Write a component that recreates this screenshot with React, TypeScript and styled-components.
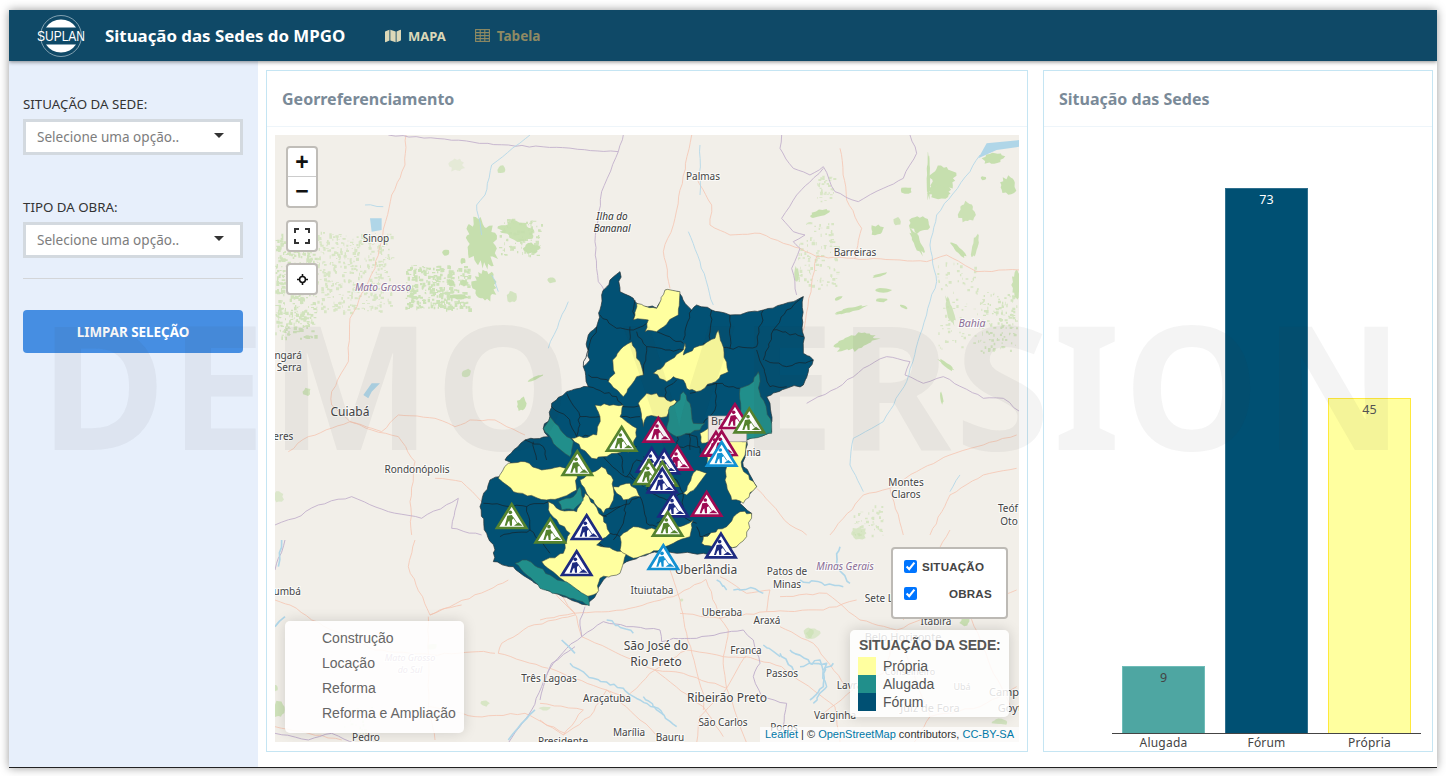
import React from "react";
import styled, { createGlobalStyle } from "styled-components";
import { FaMap } from "react-icons/fa";

const Global = createGlobalStyle`
  html, body { margin: 0; padding: 0; background: #fff; width: 1446px; height: 776px; overflow: hidden; }
  #root { width: 1446px; height: 776px; padding: 10px 9px 0; box-sizing: border-box; font-family: "Noto Sans", "Open Sans", sans-serif; }
`;

const Frame = styled.div`
  position: relative;
  width: 1428px;
  height: 758px;
  display: flex;
  flex-direction: column;
  background: #fff;
  border-bottom: 1px solid #222;
  box-sizing: border-box;
  box-shadow: 0 0 9px rgba(0, 0, 0, 0.4);
  overflow: hidden;
`;
const Nav = styled.header`
  height: 51px;
  flex: none;
  display: flex;
  align-items: center;
  background: #0f4967;
  box-shadow: 0 1px 4px rgba(0, 0, 0, 0.45);
  position: relative;
  z-index: 2;
`;
const LogoBox = styled.svg`
  width: 52px;
  height: 44px;
  margin-left: 26px;
  flex: none;
`;
const Title = styled.h1`
  margin: 0 0 0 18px;
  width: 280px;
  flex: none;
  color: #fff;
  font: 700 16.85px "Noto Sans", sans-serif;
  white-space: nowrap;
`;
const NavLink = styled.a<{ $active?: boolean }>`
  display: flex;
  align-items: center;
  gap: 7px;
  margin-right: 29px;
  font-size: ${(p) => (p.$active ? "13px" : "13.6px")};
  font-weight: 700;
  color: ${(p) => (p.$active ? "#dcd8b8" : "#8f8a63")};
  svg { font-size: 16px; }
`;
const Body = styled.div`
  flex: 1;
  display: flex;
  min-height: 0;
`;
const Sidebar = styled.aside`
  width: 249px;
  flex: none;
  box-sizing: border-box;
  padding: 33px 15px 0 14px;
  background: #e7effb;
  display: flex;
  flex-direction: column;
`;
const FieldLabel = styled.label`
  display: block;
  font-size: 13.3px;
  line-height: 20px;
  color: #333;
  margin-bottom: 5px;
`;
const SelectBox = styled.div`
  height: 36px;
  box-sizing: border-box;
  border: 3px solid #d3d9df;
  background: #fff;
  display: flex;
  align-items: center;
  justify-content: space-between;
  padding: 0 16px 0 11px;
  font-size: 13.55px;
  color: #7d7d7d;
  margin-bottom: 42px;
`;
const Caret = styled.i`
  width: 0;
  height: 0;
  margin-bottom: 3px;
  border-left: 5px solid transparent;
  border-right: 5px solid transparent;
  border-top: 5px solid #333;
`;
const Divider = styled.hr`
  margin: -22px 0 31px;
  border: 0;
  border-top: 1px solid #d3d5d8;
  width: 100%;
`;
const ClearButton = styled.button`
  height: 43px;
  border: 0;
  border-radius: 4px;
  background: #468ee2;
  color: #fff;
  font: 700 13.4px "Noto Sans", sans-serif;
`;
const Content = styled.main`
  flex: 1;
  display: flex;
  gap: 15px;
  padding: 9px 4px 15px 8px;
  box-sizing: border-box;
  min-width: 0;
`;
const Card = styled.section<{ $w: number }>`
  width: ${(p) => p.$w}px;
  flex: none;
  box-sizing: border-box;
  border: 1px solid #c5e5f3;
  display: flex;
  flex-direction: column;
  background: #fff;
`;
const CardHead = styled.div`
  height: 56px;
  flex: none;
  box-sizing: border-box;
  border-bottom: 1px solid #eef5fa;
  padding: 0 15px;
  display: flex;
  align-items: center;
  font-size: 16px;
  font-weight: 700;
  color: #7a8a98;
`;
const MapWrap = styled.div`
  position: relative;
  margin: 8px 8px 9px;
  width: 744px;
  height: 607px;
  overflow: hidden;
  background: #f2efe9;
`;
const MapSvg = styled.svg`
  display: block;
  width: 744px;
  height: 607px;
`;
const MapText = styled.text<{ $size?: number; $kind?: string }>`
  font-family: "Noto Sans", sans-serif;
  font-size: ${(p) => p.$size || 10}px;
  font-style: ${(p) => (p.$kind ? "italic" : "normal")};
  fill: ${(p) => (p.$kind === "state" ? "#8a6d96" : p.$kind === "isle" ? "#333" : "#444")};
  text-anchor: middle;
  paint-order: stroke;
  stroke: rgba(255, 255, 255, 0.7);
  stroke-width: 2px;
`;
const ControlStack = styled.div<{ $top: number }>`
  position: absolute;
  left: 11px;
  top: ${(p) => p.$top}px;
  width: 28px;
  box-sizing: content-box;
  border: 2px solid #c0bdb8;
  border-radius: 4px;
  background: #fff;
  overflow: hidden;
`;
const ControlBtn = styled.div<{ $big?: boolean }>`
  height: 28px;
  display: flex;
  align-items: center;
  justify-content: center;
  font: 700 ${(p) => (p.$big ? "23px" : "14px")} "Liberation Sans", sans-serif;
  color: #111;
  & + & { border-top: 1px solid #ccc; height: 29px; }
`;
const LayersBox = styled.div`
  position: absolute;
  left: 616px;
  top: 412px;
  width: 117px;
  height: 72px;
  box-sizing: border-box;
  border: 2px solid #bdbab5;
  border-radius: 4px;
  background: #fff;
  padding: 7px 0 0 11px;
  display: flex;
  flex-direction: column;
  gap: 7px;
`;
const LayerRow = styled.label<{ $indent?: number }>`
  display: flex;
  align-items: center;
  height: 20px;
  font: 700 11.6px "Liberation Sans", sans-serif;
  letter-spacing: 0.2px;
  color: #444;
  input { margin: 0 ${(p) => p.$indent ?? 5}px 0 0; width: 13px; height: 13px; }
`;
const Legend = styled.div`
  position: absolute;
  left: 575px;
  top: 495px;
  width: 159px;
  height: 87px;
  box-sizing: border-box;
  padding: 7px 0 0 8px;
  border-radius: 5px;
  background: rgba(255, 255, 255, 0.84);
  box-shadow: 0 0 14px rgba(0, 0, 0, 0.16);
  font-family: "Liberation Sans", sans-serif;
  color: #555;
`;
const LegendTitle = styled.div`
  font-size: 14px;
  font-weight: 700;
  line-height: 16px;
  margin-bottom: 4px;
  padding-left: 1px;
  letter-spacing: -0.1px;
`;
const LegendRow = styled.div`
  display: flex;
  align-items: center;
  height: 18px;
  font-size: 14px;
`;
const Swatch = styled.i<{ $c: string }>`
  width: 18px;
  height: 18px;
  margin-right: 7px;
  background: ${(p) => p.$c};
`;
const ObraLegend = styled.div`
  position: absolute;
  left: 10px;
  top: 486px;
  width: 179px;
  height: 112px;
  box-sizing: border-box;
  padding: 5px 0 0 37px;
  border-radius: 5px;
  background: rgba(255, 255, 255, 0.88);
  box-shadow: 0 0 14px rgba(0, 0, 0, 0.14);
  font: 14px/25px "Liberation Sans", sans-serif;
  color: #666;
  white-space: nowrap;
`;
const Attribution = styled.div`
  position: absolute;
  right: 0;
  bottom: 0;
  height: 15px;
  padding: 0 5px;
  background: rgba(255, 255, 255, 0.7);
  font: 11px/15px "Liberation Sans", sans-serif;
  color: #333;
  a { color: #0078a8; }
`;
const Chart = styled.div`
  flex: 1;
  display: flex;
  flex-direction: column;
  justify-content: flex-end;
  padding: 0 11px 0 68px;
`;
const Bars = styled.div`
  display: flex;
  align-items: flex-end;
  gap: 20px;
  padding: 0 9px 0 10px;
  border-bottom: 1px solid #444;
`;
const Bar = styled.div<{ $bg: string; $line: string; $fg: string }>`
  width: 83px;
  box-sizing: border-box;
  padding-top: 2px;
  background: ${(p) => p.$bg};
  border: 1px solid ${(p) => p.$line};
  border-bottom: 0;
  color: ${(p) => p.$fg};
  font-size: 12.5px;
  line-height: 18px;
  text-align: center;
`;
const Ticks = styled.div`
  display: flex;
  gap: 20px;
  padding: 0 9px 0 10px;
  height: 17px;
`;
const Tick = styled.span`
  width: 83px;
  text-align: center;
  font-size: 12px;
  line-height: 17px;
  letter-spacing: 0.2px;
  color: #444;
`;
const Watermark = styled.div`
  position: absolute;
  left: 31px;
  top: 287px;
  font: 700 172px/172px "Noto Sans", sans-serif;
  letter-spacing: 3.6px;
  color: rgba(50, 50, 50, 0.055);
  white-space: pre;
  pointer-events: none;
  z-index: 5;
`;

const T = (x: number, y: number) => `translate(${x} ${y}) scale(0.3333)`;
const ROAD = "#f5c6b3";
const WATER = "#b0d6e8";
const BORDER = "#c0aecb";
const GREEN = "#c6dfae";

/* deterministic noise so that map outlines look like real geography */
const makeRng = (text: string) => {
  let h = 2166136261;
  for (let i = 0; i < text.length; i++) h = Math.imul(h ^ text.charCodeAt(i), 16777619);
  return () => {
    h = Math.imul(h ^ (h >>> 15), 2246822519);
    h = Math.imul(h ^ (h >>> 13), 3266489917);
    return ((h ^= h >>> 16) >>> 0) / 4294967296;
  };
};
const rough = (pts: string, amp: number, step: number, closed = false) => {
  const r = makeRng(pts);
  const p = pts.split(" ").map((s) => s.split(",").map(Number));
  if (closed) p.push(p[0]);
  const out: string[] = [];
  for (let i = 0; i < p.length - 1; i++) {
    const [ax, ay] = p[i];
    const [bx, by] = p[i + 1];
    const n = Math.max(1, Math.ceil(Math.hypot(bx - ax, by - ay) / step));
    out.push(`${ax},${ay}`);
    for (let k = 1; k < n; k++) {
      const t = k / n;
      out.push(`${(ax + (bx - ax) * t + (r() - 0.5) * 2 * amp).toFixed(1)},${(ay + (by - ay) * t + (r() - 0.5) * 2 * amp).toFixed(1)}`);
    }
  }
  if (!closed) out.push(p[p.length - 1].join(","));
  return out.join(" ");
};
const blob = ([cx, cy, rx, ry, rot]: number[]) => {
  const r = makeRng(`${cx}:${cy}`);
  const a = (rot * Math.PI) / 180;
  const count = Math.max(10, Math.round((rx + ry) / 2.5));
  const out: string[] = [];
  for (let i = 0; i < count; i++) {
    const th = (i / count) * Math.PI * 2;
    const k = 0.72 + r() * 0.5;
    const x = Math.cos(th) * rx * k;
    const y = Math.sin(th) * ry * k;
    out.push(`${(cx + x * Math.cos(a) - y * Math.sin(a)).toFixed(1)},${(cy + x * Math.sin(a) + y * Math.cos(a)).toFixed(1)}`);
  }
  return out.join(" ");
};
const specks = (seed: string, x0: number, y0: number, x1: number, y1: number, n: number, size: number) => {
  const r = makeRng(seed);
  let d = "";
  for (let i = 0; i < n; i++) {
    const w = 2 + r() * size;
    const h = 2 + r() * size;
    d += `M${(x0 + r() * (x1 - x0)).toFixed(0)} ${(y0 + r() * (y1 - y0)).toFixed(0)}h${w.toFixed(0)}v${h.toFixed(0)}h${(-w).toFixed(0)}z`;
  }
  return d;
};

const z8Roads = [
  "393,0 390,90 350,180 300,400 225,550 220,680 170,770 170,810 225,860",
  "40,950 100,905 225,860 290,880 320,890 370,840 480,850 540,875 585,855 660,855 750,900",
  "225,860 290,885 370,905 420,980 405,1100 410,1200",
  "480,1030 560,1040 620,1100",
];
const z8Borders = [
  "340,0 700,30 1030,50",
  "1045,0 1030,50 980,170 960,320 970,440 990,470",
  "0,1170 60,1150 130,1110 230,1085 340,1130 440,1150 550,1090 530,1180 620,1200",
];
const z8Water = ["765,0 650,90 630,180 605,210 620,300", "270,210 325,215", "650,420 670,470", "880,500 820,640"];
const z8Green: number[][] = [
  [620, 325, 45, 70, -15, 1], [730, 290, 55, 30, 15, 0.95], [770, 340, 25, 15, 0, 1], [630, 450, 35, 45, 0, 1],
  [550, 485, 30, 8, 0, 1], [528, 443, 10, 10, 0, 1],
  [565, 443, 10, 10, 0, 1], [563, 377, 8, 10, 0, 1], [512, 352, 10, 10, 0, 1], [740, 808, 15, 22, 20, 1],
  [780, 730, 25, 4, -25, 1], [680, 105, 12, 12, 0, 0.8], [545, 90, 22, 20, 0, 0.3],
  [95, 770, 12, 12, 0, 0.8], [575, 715, 14, 12, 0, 0.7], [830, 435, 14, 9, 0, 0.8], [710, 485, 14, 18, 0, 0.7],
  [10, 1085, 16, 16, 0, 0.5],
];
const z9Roads = [
  "125,0 75,250 40,350 60,460",
  "140,130 185,210 180,270 240,300 330,295 400,325 450,340 500,365 610,370 830,380 890,360 980,410 1110,405",
  "570,40 590,195 635,280 615,370",
  "500,365 450,640",
  "1100,900 1000,930 900,960 800,1010 720,1060 640,1080 580,1150 540,1200",
  "320,1060 420,1170 470,1200",
  "1100,1000 1000,1020 900,1080 840,1200",
  "720,1060 760,1200",
];
const z9Borders = [
  "395,0 390,40 430,100 480,120 520,95 555,170 625,200 700,160 760,130 800,55 780,0",
  "520,100 440,180 395,250 430,290 465,300 430,320 450,340 425,400 440,480",
  "470,805 560,760 640,700 710,665 780,680 765,720 820,745 880,725 1000,790 1060,790 1110,830",
];
const z9Water = [
  "150,30 150,180",
  "115,290 150,380 190,510",
  "990,60 960,110 860,240 840,330 860,440 810,600 770,740 700,860 610,910 600,990 640,1070",
  "930,1020 900,1070",
];
const z9Green: number[][] = [
  [880, 130, 38, 35, 0, 1], [870, 170, 35, 20, 0, 1], [835, 130, 5, 70, 0, 1], [808, 268, 28, 25, 0, 1],
  [800, 320, 12, 42, -25, 1], [950, 230, 25, 30, 0, 0.9], [1075, 150, 25, 25, 0, 1], [1030, 70, 32, 18, -10, 1],
  [680, 285, 20, 15, 0, 1], [510, 235, 30, 10, -15, 1], [600, 525, 50, 7, -15, 1], [620, 620, 65, 24, -15, 1],
  [890, 690, 30, 7, 35, 1], [700, 465, 22, 7, 0, 1], [695, 495, 18, 6, 0, 1], [925, 345, 28, 9, 45, 1],
  [975, 335, 9, 35, 10, 0.9], [900, 530, 10, 45, -15, 0.8], [1100, 450, 14, 40, 0, 0.9],
  [740, 260, 12, 12, 0, 0.8], [770, 165, 16, 10, 0, 1],
  [440, 420, 7, 25, 0, 0.9], [565, 490, 12, 6, -25, 1], [690, 420, 25, 5, -15, 1],
  [760, 515, 14, 5, 30, 1], [1000, 130, 8, 6, 0, 1], [875, 790, 5, 18, -10, 1],
];
const z10Roads = [
  "60,70 110,140 125,200 345,300 490,410 550,500",
  "390,0 420,90 440,190 490,370 490,420",
  "498,28 540,145 565,180 550,260 560,355 620,519",
  "0,150 100,130 250,120 400,80 498,28",
  "420,130 540,145 680,125 850,120 950,90",
  "680,125 690,60 620,70 540,20",
  "345,300 430,310 560,355 615,260 725,290",
  "618,262 550,260 440,240 345,300",
  "345,300 260,380 200,360 30,295",
  "200,360 150,440 70,495",
  "200,360 300,450 380,519",
  "560,355 480,440 470,519",
  "725,290 885,410 900,519",
  "0,400 130,420 70,495 0,450",
];
const z10Borders = [
  "135,110 120,150 125,200 80,235 30,295 10,350 0,390",
  "125,200 190,155 260,170 360,180 365,215 400,205 470,205 540,190 610,180 640,210 660,280 640,320 665,380 740,400 730,470",
];
const z10Water = [
  "90,280 160,325 250,355 300,390 350,420 410,470",
  "580,60 640,55 670,70",
  "780,290 840,270 860,350 820,400",
  "200,150 280,190",
  "530,30 560,60",
  "670,225 720,260",
  "780,30 910,50",
  "310,380 340,410 370,435",
];
const z10Green: number[][] = [[805, 190, 15, 15, 0, 0.6], [15, 415, 18, 6, 0, 0.5], [425, 90, 5, 4, 0, 0.6]];
const z4Roads = [
  "420,0 400,80 465,225 640,150 700,120",
  "465,225 510,205 560,195",
  "460,230 460,500 480,600",
  "660,340 610,335 470,345 300,330 110,240 45,195 0,180",
  "900,225 760,260 680,310 670,340 820,385",
  "460,500 600,530 750,520 870,580",
  "0,560 200,600",
  "840,160 900,220",
];
const z4Borders = [
  "30,0 0,90",
  "0,580 100,600 170,580 240,610",
  "900,320 830,370 800,440 770,510 700,609",
];
const z4Green: number[][] = [[10, 510, 18, 24, 0, 0.8], [0, 445, 10, 10, 0, 0.7], [470, 320, 16, 10, 0, 0.6], [630, 490, 12, 9, 0, 0.6]];
const z4Water = ["20,0 10,80", "0,260 30,230", "780,510 740,550 700,600", "860,300 900,340"];
const z5Roads = [
  "0,200 140,190 240,270 350,300 420,270 560,230 710,180",
  "350,300 310,430 230,470 120,560",
  "350,300 450,560 400,640",
  "370,270 430,130 510,0",
  "560,230 640,430 700,540",
  "0,290 100,340 200,470",
  "450,560 600,530 710,470",
];
const z5Water = [
  "180,50 170,100 210,160",
  "30,360 90,400 140,400 130,470 90,510",
  "130,420 160,400",
  "0,370 40,420",
];
const z5Green: number[][] = [[235, 10, 25, 18, 0, 0.6], [100, 310, 20, 15, 0, 0.5], [555, 275, 15, 12, 0, 0.9], [660, 575, 25, 10, 0, 0.7]];

const navy =
  "450,35 420,60 395,105 390,150 380,200 355,225 350,260 360,300 340,320 355,380 290,395 245,430 240,470 220,505 235,530 165,540 105,600 130,615 90,650 60,660 30,740 50,820 75,870 70,905 130,920 145,935 220,985 350,1035 380,1000 400,960 470,905 540,880 620,880 700,880 720,890 800,860 845,760 810,730 860,680 820,620 830,540 905,515 900,430 890,410 950,385 1000,375 1030,300 1000,280 1000,110 970,125 880,150 780,165 725,150 680,135 665,150 625,95 590,90 560,145 500,130 490,115 450,95";
const yellow = [
  "585,90 630,95 625,165 560,215 525,215 535,180 490,180 500,130 560,145",
  "460,260 485,245 520,345 500,350 460,410 415,365 435,340 428,300",
  "745,210 775,335 725,370 680,395 650,385 640,360 610,350 590,365 550,340 600,300 640,270 645,250 640,285 700,255 735,235",
  "530,400 560,400 590,420 620,425 590,470 560,470 530,470 520,500 505,430",
  "375,435 460,435 450,470 500,505 490,570 400,590 365,595 305,535 380,525 390,470",
  "85,655 115,610 165,605 215,630 270,620 320,640 320,690 280,710 230,720 130,695",
  "330,660 395,620 430,660 430,720 400,760 350,700",
  "430,680 480,670 510,710 460,720 440,700",
  "235,725 270,750 320,755 345,700 400,770 420,820 380,855 470,880 450,940 390,955 380,1000 350,1010 300,980 215,905 280,880 300,820 240,760",
  "450,830 490,800 560,810 630,800 670,780 660,830 610,850 540,880 490,895 450,870",
  "750,540 830,545 815,620 860,680 820,730 785,720 765,660 770,620 720,620 700,570 740,580",
  "640,700 680,630 710,640 680,680 650,705",
  "700,830 770,800 810,755 845,760 830,830 800,860 730,860 695,850",
  "690,520 715,505 715,545 695,550",
];
const teal = [
  "865,335 870,400 905,490 905,520 830,540 810,460 810,385 850,365",
  "640,395 660,430 670,490 705,490 690,510 620,530 590,510 600,440 630,420",
  "240,470 280,520 310,545 300,590 260,560 220,505",
  "330,680 340,720 310,750 275,750 265,725 310,710",
  "135,910 170,900 240,945 310,980 355,1010 358,1037 300,1015 210,985",
];
const inner = [
  "390,165 440,205 490,210 530,190", "495,120 490,180", "380,200 355,270 340,320", "480,200 480,240",
  "355,345 420,365", "355,380 440,410 460,440", "290,400 330,470 390,470", "245,440 290,470 320,530",
  "165,540 220,560 230,600", "330,470 320,530 370,525", "200,600 190,545", "500,215 530,260 520,345",
  "560,215 610,240 640,250", "530,260 600,270 640,270", "665,150 640,240", "725,150 720,240",
  "780,165 780,265 700,250", "880,150 860,260 780,265", "1000,110 950,150 910,210 880,300", "910,210 1000,230",
  "885,300 950,320 1030,300", "860,270 900,380 950,380", "730,370 790,380 810,385", "660,400 740,370",
  "740,370 735,450 700,490", "620,360 585,385 590,420", "455,470 510,470", "450,440 520,440",
  "400,590 450,640 490,660", "455,590 460,640", "500,600 530,610", "620,510 625,560 690,560",
  "640,520 680,530 690,580", "660,510 660,570", "40,730 170,740 235,725", "170,740 180,810 240,880",
  "90,830 180,810", "470,720 460,790 430,840", "400,750 450,740 510,710", "510,710 530,790 560,800",
  "640,700 640,770 680,790", "680,800 690,830 720,820", "400,770 450,740", "340,750 410,770",
  "450,870 520,850 560,840", "420,820 450,830", "340,800 420,880",
  "400,590 420,560 455,590", "455,540 500,560", "520,590 560,640 530,690", "480,640 520,680", "560,640 620,660",
  "620,660 640,700", "530,690 590,720", "590,720 640,700", "470,650 500,600", "560,790 600,760",
];

const C = { g: "#55832f", n: "#1d2a80", r: "#9f0a52", b: "#1291d2" };
const markers: [string, number, number][] = [
  ["r", 622, 552], ["n", 545, 558], ["n", 583, 563], ["g", 537, 595], ["g", 577, 600], ["n", 577, 620],
  ["r", 565, 468], ["g", 455, 495], ["g", 322, 568], ["n", 610, 692], ["r", 710, 690], ["g", 593, 750],
  ["n", 350, 760], ["g", 125, 727], ["g", 241, 770], ["n", 320, 868], ["n", 753, 815], ["b", 580, 850],
  ["r", 738, 510], ["r", 755, 508], ["b", 755, 540], ["r", 795, 427], ["g", 838, 440],
];

const labels: [string, number, number, number?, string?][] = [
  ["Palmas", 703, 180], ["Barreiras", 855, 256], ["Montes", 906, 486], ["Claros", 906, 498], ["Teóf", 1008, 512],
  ["Oto", 1009, 525], ["Bahia", 972, 327, 10.5, "state"], ["Ilha do", 612, 220, 10, "isle"], ["Bananal", 612, 232, 10, "isle"],
  ["Sinop", 376, 242], ["Mato Grosso", 383, 291, 10, "state"], ["Tangará", 283, 359], ["da Serra", 282, 371],
  ["Cuiabá", 350, 416, 12], ["Cáceres", 275, 440], ["Rondonópolis", 417, 473], ["Goiânia", 743, 456],
  ["Uberlândia", 706, 574, 12], ["Ituiutaba", 652, 594], ["Patos de", 787, 575], ["Minas", 787, 588], ["Uberaba", 722, 616],
  ["Araxá", 767, 624], ["São José do", 656, 650, 12], ["Rio Preto", 656, 666, 12], ["Franca", 746, 654], ["Passos", 782, 677],
  ["Três Lagoas", 549, 682], ["Araçatuba", 607, 702], ["Ribeirão Preto", 727, 702, 12], ["São Carlos", 723, 726], ["Marília", 629, 736],
  ["Bauru", 670, 741], ["Varginha", 835, 719], ["Poços", 784, 731], ["Presidente", 563, 745], ["Pedro", 366, 741],
  ["Corumbá", 279, 595], ["Sete Lagoas", 893, 602], ["Itabira", 936, 625], ["Minas Gerais", 845, 570, 10, "state"],
  ["Belo Horizonte", 903, 641, 11], ["Conselheiro", 910, 675, 9], ["Ubá", 962, 690, 9], ["Juiz de Fora", 930, 712, 11],
  ["Campos", 1010, 696, 11], ["Goytacazes", 1027, 712, 11], ["Lavras", 852, 689], ["Mato Grosso", 410, 661, 9, "state"], ["do Sul", 410, 673, 9, "state"],
];

const Lines = ({ list, color, w, amp = 2.5, step = 22 }: { list: string[]; color: string; w: number; amp?: number; step?: number }) => (
  <>
    {list.map((p) => (
      <polyline key={p} points={rough(p, amp, step)} fill="none" stroke={color} strokeWidth={w} strokeLinejoin="round" />
    ))}
  </>
);
const Patches = ({ list }: { list: number[][] }) => (
  <>
    {list.map((b) => (
      <polygon key={`${b[0]}-${b[1]}`} points={blob(b)} fill={GREEN} opacity={b[5]} />
    ))}
  </>
);
const Marker = ({ c, x, y }: { c: string; x: number; y: number }) => (
  <g transform={`translate(${x - 50} ${y})`} fill={c}>
    <polygon points="50,6 94,77 6,77" fill="#fff" stroke={c} strokeWidth={8} strokeLinejoin="miter" />
    <circle cx="46" cy="30" r="5.5" />
    <path d="M37 40 L51 38 L56 49 L51 52 L51 70 L45 70 L43 55 L39 59 L35 70 L29 70 L34 53Z" />
    <line x1="53" y1="43" x2="66" y2="62" stroke={c} strokeWidth={2.5} />
    <path d="M57 70 L70 60 L83 70Z" />
  </g>
);

const TileMap = () => (
  <MapSvg viewBox="275 135 744 607">
    <rect x="275" y="135" width="744" height="607" fill="#f2efe9" />
    <g transform={T(275, 135)}>
      <Patches list={z8Green} />
      <path d={specks("a", 0, 290, 120, 610, 420, 9)} fill={GREEN} opacity={0.75} />
      <path d={specks("b", 120, 290, 350, 530, 420, 8)} fill={GREEN} opacity={0.6} />
      <path d={specks("c", 390, 390, 580, 520, 320, 10)} fill={GREEN} opacity={0.85} />
      <path d={specks("c2", 670, 250, 800, 360, 90, 9)} fill={GREEN} opacity={0.8} />
      <Lines list={z8Roads} color={ROAD} w={2.5} />
      <Lines list={z8Borders} color={BORDER} w={2.6} />
      <Lines list={z8Water} color={WATER} w={2.5} />
      <path d="M265 780 L290 745 L315 745 L290 770 L280 790Z M285 250 L320 250 L320 285 L290 290Z" fill={WATER} />
    </g>
    <g transform={T(650, 135)}>
      <Patches list={z9Green} />
      <path d={specks("d", 990, 470, 1100, 650, 130, 7)} fill={GREEN} opacity={0.7} />
      <path d={specks("e", 440, 260, 560, 460, 110, 8)} fill={GREEN} opacity={0.6} />
      <path d={specks("f", 610, 1110, 700, 1200, 50, 7)} fill={GREEN} opacity={0.6} />
      <path d={specks("g", 860, 380, 1000, 640, 90, 7)} fill={GREEN} opacity={0.6} />
      <path d={specks("h", 500, 120, 550, 200, 40, 7)} fill={GREEN} opacity={0.6} />
      <Lines list={z9Roads} color={ROAD} w={2.5} />
      <Lines list={z9Borders} color={BORDER} w={2.6} />
      <Lines list={z9Water} color={WATER} w={2.5} />
      <path d="M985 70 L1010 25 L1110 15 L1110 35 L1040 45Z" fill={WATER} />
    </g>
    <g transform={T(540, 570)}>
      <Patches list={z10Green} />
      <Lines list={z10Roads} color={ROAD} w={2.5} />
      <Lines list={z10Borders} color={BORDER} w={2.8} />
      <Lines list={z10Water} color={WATER} w={4.5} amp={5} step={14} />
    </g>
    <g transform={T(275, 540)}>
      <Patches list={z4Green} />
      <path d={specks("i", 200, 500, 290, 590, 40, 6)} fill={GREEN} opacity={0.5} />
      <Lines list={z4Roads} color={ROAD} w={2.5} />
      <Lines list={z4Borders} color={BORDER} w={2.8} />
      <Lines list={z4Water} color={WATER} w={5} />
    </g>
    <g transform={T(780, 530)}>
      <Patches list={z5Green} />
      <Lines list={z5Roads} color={ROAD} w={2.5} />
      <Lines list={z5Water} color={WATER} w={5} amp={5} step={14} />
    </g>
    {labels.map(([t, x, y, s, k]) => (
      <MapText key={t + x} x={x} y={y} $size={s} $kind={k}>{t}</MapText>
    ))}
    <g transform={T(470, 260)}>
      <polygon points={rough(navy, 4, 16, true)} fill="#025174" stroke="#26343a" strokeWidth={2.2} />
      <Lines list={inner} color="#14232c" w={2.2} amp={4} step={15} />
      {yellow.map((p) => (
        <polygon key={p} points={rough(p, 4, 15, true)} fill="#ffff9f" stroke="#3b4440" strokeWidth={1.8} />
      ))}
      {teal.map((p) => (
        <polygon key={p} points={rough(p, 3.5, 15, true)} fill="#218f8b" stroke="#30504f" strokeWidth={1.8} />
      ))}
      <polygon points="715,468 830,468 830,545 715,545" fill="#ece4e2" stroke="#9b9b96" strokeWidth={2} />
      <MapText x={778} y={494} $size={32}>Brasília</MapText>
      {markers.map(([c, x, y]) => (
        <Marker key={`${x}-${y}`} c={C[c as keyof typeof C]} x={x} y={y} />
      ))}
    </g>
  </MapSvg>
);

const Logo = () => (
  <LogoBox viewBox="0 0 52 44">
    <circle cx="26" cy="22" r="20.5" fill="none" stroke="#9fb7c4" strokeWidth="0.8" />
    <path d="M11 13.5 A18 18 0 0 1 41 13.5Z" fill="#fff" />
    <path d="M11 30.5 A18 18 0 0 0 41 30.5Z" fill="#fff" />
    <text x="2" y="26.5" fontFamily="Liberation Sans" fontSize="14" fill="#fff" textLength="48" lengthAdjust="spacingAndGlyphs">SUPLAN</text>
  </LogoBox>
);

const GridIcon = () => (
  <svg width="15" height="13" viewBox="0 0 15 13" fill="none" stroke="currentColor" strokeWidth="1.1">
    <rect x="0.6" y="0.6" width="13.8" height="11.8" />
    <path d="M0.6 3.6h13.8M0.6 6.6h13.8M0.6 9.6h13.8M5.2 0.6v11.8M9.8 0.6v11.8" />
  </svg>
);
const LocateIcon = () => (
  <svg width="11" height="11" viewBox="0 0 12 12" fill="none" stroke="#111" strokeWidth="1.7">
    <circle cx="6" cy="6" r="3.2" />
    <path d="M6 0v3M6 9v3M0 6h3M9 6h3" />
  </svg>
);
const ExpandIcon = () => (
  <svg width="16" height="16" viewBox="0 0 16 16" fill="none" stroke="#333" strokeWidth="2">
    <path d="M1 5V1h4M11 1h4v4M15 11v4h-4M5 15H1v-4" />
  </svg>
);

export default function App() {
  return (
    <>
      <Global />
      <Frame>
        <Nav>
          <Logo />
          <Title>Situação das Sedes do MPGO</Title>
          <NavLink $active><FaMap />MAPA</NavLink>
          <NavLink><GridIcon />Tabela</NavLink>
        </Nav>
        <Body>
          <Sidebar>
            <FieldLabel>SITUAÇÃO DA SEDE:</FieldLabel>
            <SelectBox>Selecione uma opção..<Caret /></SelectBox>
            <FieldLabel>TIPO DA OBRA:</FieldLabel>
            <SelectBox>Selecione uma opção..<Caret /></SelectBox>
            <Divider />
            <ClearButton>LIMPAR SELEÇÃO</ClearButton>
          </Sidebar>
          <Content>
            <Card $w={762}>
              <CardHead>Georreferenciamento</CardHead>
              <MapWrap>
                <TileMap />
                <ControlStack $top={11}>
                  <ControlBtn $big>+</ControlBtn>
                  <ControlBtn $big>−</ControlBtn>
                </ControlStack>
                <ControlStack $top={85}>
                  <ControlBtn><ExpandIcon /></ControlBtn>
                </ControlStack>
                <ControlStack $top={128}>
                  <ControlBtn><LocateIcon /></ControlBtn>
                </ControlStack>
                <LayersBox>
                  <LayerRow><input type="checkbox" checked readOnly />SITUAÇÃO</LayerRow>
                  <LayerRow $indent={32}><input type="checkbox" checked readOnly />OBRAS</LayerRow>
                </LayersBox>
                <Legend>
                  <LegendTitle>SITUAÇÃO DA SEDE:</LegendTitle>
                  <LegendRow><Swatch $c="#ffff9f" />Própria</LegendRow>
                  <LegendRow><Swatch $c="#218f8b" />Alugada</LegendRow>
                  <LegendRow><Swatch $c="#005073" />Fórum</LegendRow>
                </Legend>
                <ObraLegend>
                  <div>Construção</div>
                  <div>Locação</div>
                  <div>Reforma</div>
                  <div>Reforma e Ampliação</div>
                </ObraLegend>
                <Attribution>
                  <a>Leaflet</a> | © <a>OpenStreetMap</a> contributors, <a>CC-BY-SA</a>
                </Attribution>
              </MapWrap>
            </Card>
            <Card $w={390}>
              <CardHead>Situação das Sedes</CardHead>
              <Chart>
                <Bars>
                  <Bar $bg="#4ea6a2" $line="#6fbcb8" $fg="#444" style={{ height: 67 }}>9</Bar>
                  <Bar $bg="#005073" $line="#2f6f8d" $fg="#fff" style={{ height: 545 }}>73</Bar>
                  <Bar $bg="#ffff9f" $line="#ffe93b" $fg="#555" style={{ height: 335 }}>45</Bar>
                </Bars>
                <Ticks>
                  <Tick>Alugada</Tick>
                  <Tick>Fórum</Tick>
                  <Tick>Própria</Tick>
                </Ticks>
              </Chart>
            </Card>
          </Content>
        </Body>
        <Watermark>DEMO VERSION</Watermark>
      </Frame>
    </>
  );
}
